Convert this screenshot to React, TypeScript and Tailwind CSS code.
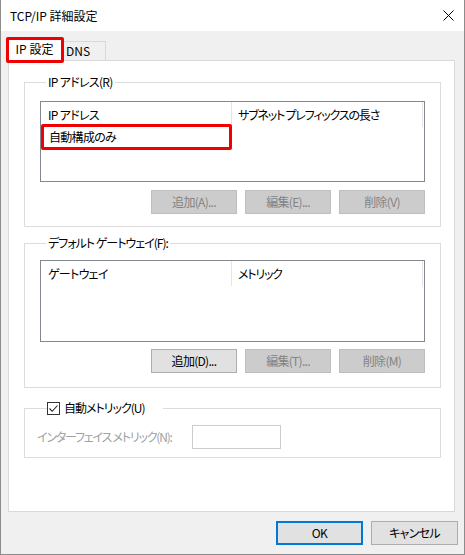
import React from "react";

type BtnProps = { label: string; disabled?: boolean; primary?: boolean };

function Btn({ label, disabled, primary }: BtnProps) {
  let cls = "flex h-[24px] w-[86px] items-center justify-center border border-[#adadad] bg-[#e1e1e1] text-black";
  if (disabled) cls = "flex h-[24px] w-[86px] items-center justify-center border border-[#bfbfbf] bg-[#cccccc] text-[#838383]";
  if (primary) cls = "flex h-[24px] w-[87px] items-center justify-center border-2 border-[#0078d7] bg-[#e1e1e1] text-black";
  return <div className={cls}>{label}</div>;
}

function ListBox({ col1, col2, row, tall }: { col1: string; col2: string; row?: string; tall?: boolean }) {
  return (
    <div className={tall ? "h-[82px] w-[385px] border border-[#828790] bg-white" : "h-[81px] w-[385px] border border-[#828790] bg-white"}>
      <div className="flex h-[25px]">
        <div className="flex h-full w-[191px] items-center border-r border-[#e5e5e5] pl-[7px]">{col1}</div>
        <div className="flex h-full w-[191px] items-center border-r border-[#e5e5e5] pl-[6px] tracking-[-1.2px]">{col2}</div>
      </div>
      {row && (
        <div className="relative flex h-[20px] items-center pl-[8px]">
          {row}
          {/* annotation box */}
          <div className="pointer-events-none absolute left-0 top-[-3px] z-20 h-[26px] w-[191px] rounded-[2px] border-[3px] border-[#f00000]" />
        </div>
      )}
    </div>
  );
}

export default function App() {
  return (
    <div className="relative h-[555px] w-[465px] border-x border-b border-[#8c8c8c] bg-[#f0f0f0] text-[12px] leading-[16px] tracking-[-0.7px] text-black font-['Noto_Sans_CJK_JP','Noto_Sans',sans-serif] [font-feature-settings:'palt']">
      {/* title bar */}
      <div className="flex h-[31px] items-center justify-between bg-white pl-[9px] pr-[10px]">
        <span className="tracking-normal">TCP/IP 詳細設定</span>
        <svg width="11" height="11" viewBox="0 0 11 11" className="mb-px">
          <path d="M0.5 0.5 L10.5 10.5 M10.5 0.5 L0.5 10.5" stroke="#000" strokeWidth="1" />
        </svg>
      </div>

      {/* tabs */}
      <div className="flex h-[29px] items-end pl-[5px]">
        <div className="relative z-10 -mb-px flex h-[24px] w-[57px] items-center justify-center border-x border-t border-[#d9d9d9] bg-white pb-px tracking-normal">
          IP 設定
        </div>
        <div className="flex h-[19px] w-[43px] items-center border-r border-t border-[#d9d9d9] pl-[3px] tracking-normal">DNS</div>
      </div>

      {/* panel */}
      <div className="ml-[7px] h-[452px] w-[447px] border border-[#d9d9d9] bg-white pt-[13px] pl-[15px]">
        <fieldset className="w-[417px] border border-[#dcdcdc] px-[15px] pb-[12px]">
          <legend className="ml-[6px] px-[2px]">IP アドレス(R)</legend>
          <div className="mt-[11px]">
            <ListBox col1="IP アドレス" col2="サブネット プレフィックスの長さ" row="自動構成のみ" />
          </div>
          <div className="mt-[8px] flex w-[385px] justify-end gap-[8px]">
            <Btn label="追加(A)..." disabled />
            <Btn label="編集(E)..." disabled />
            <Btn label="削除(V)" disabled />
          </div>
        </fieldset>

        <fieldset className="mt-[8px] w-[417px] border border-[#dcdcdc] px-[15px] pb-[14px]">
          <legend className="ml-[6px] px-[2px] tracking-[-1px]">デフォルト ゲートウェイ(F):</legend>
          <div className="mt-[9px]">
            <ListBox col1="ゲートウェイ" col2="メトリック" tall />
          </div>
          <div className="mt-[7px] flex w-[385px] justify-end gap-[8px]">
            <Btn label="追加(D)..." />
            <Btn label="編集(T)..." disabled />
            <Btn label="削除(M)" disabled />
          </div>
        </fieldset>

        <fieldset className="mt-[12px] w-[417px] border border-[#dcdcdc] pb-[8px] pl-[12px]">
          <legend className="ml-[10px] flex w-[116px] items-center">
            <span className="flex h-[13px] w-[13px] items-center justify-center border border-[#333333] bg-white">
              <svg width="11" height="11" viewBox="0 0 11 11">
                <path d="M1.5 5.5 L4.2 8.3 L9.5 2.5" fill="none" stroke="#222" strokeWidth="1.1" />
              </svg>
            </span>
            <span className="ml-[4px] tracking-[-1px]">自動メトリック(U)</span>
          </legend>
          <div className="mt-[9px] flex items-center">
            <span className="w-[155px] whitespace-nowrap tracking-[-1.2px] text-[#a0a0a0]">インターフェイス メトリック(N):</span>
            <div className="h-[24px] w-[89px] border border-[#cccccc] bg-white" />
          </div>
        </fieldset>
      </div>

      {/* dialog buttons */}
      <div className="mt-[9px] flex justify-end gap-[8px] pr-[6px]">
        <Btn label="OK" primary />
        <div className="flex h-[24px] w-[87px] items-center justify-center border border-[#adadad] bg-[#e1e1e1]">キャンセル</div>
      </div>

      {/* annotation box around selected tab */}
      <div className="pointer-events-none absolute left-[5px] top-[37px] z-20 h-[26px] w-[58px] rounded-[2px] border-[3px] border-[#f00000]" />
    </div>
  );
}
